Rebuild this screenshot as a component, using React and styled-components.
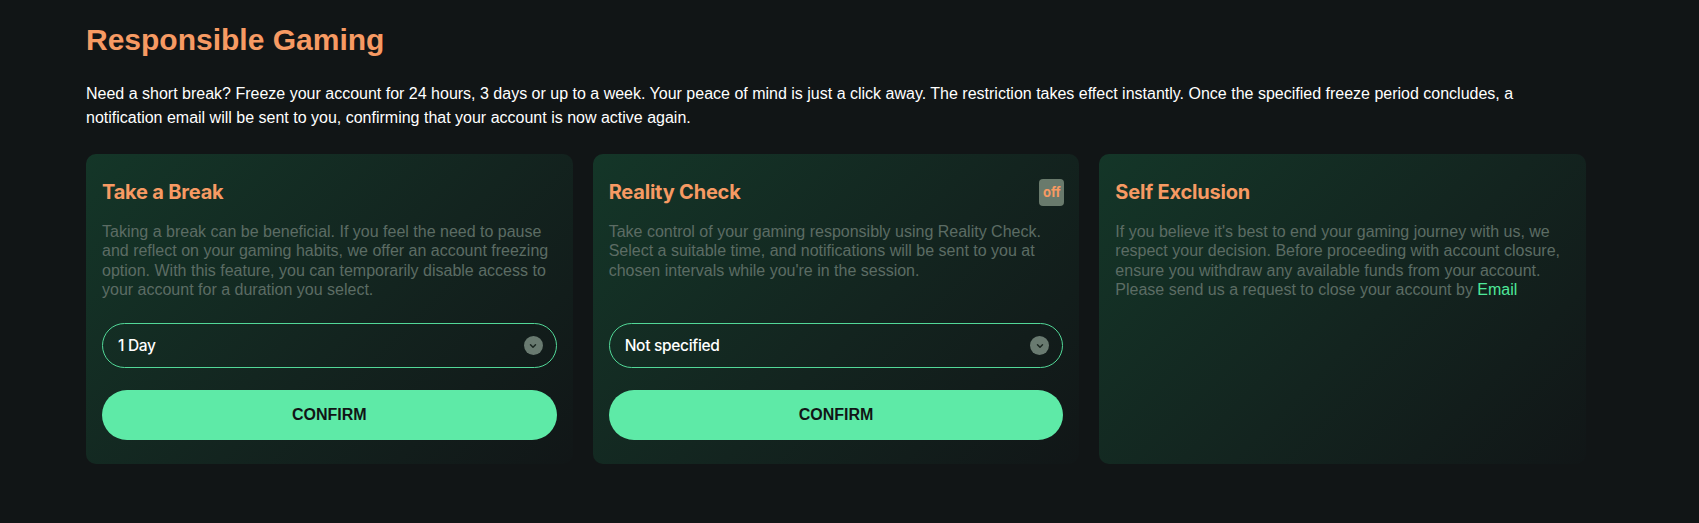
import React, { useState } from 'react'
import styled, { createGlobalStyle } from 'styled-components'

const GlobalStyle = createGlobalStyle`
  html, body {
    margin: 0;
    padding: 0;
    background: #111516;
  }
  body {
    font-family: "Liberation Sans", Arial, sans-serif;
  }
`

const Page = styled.div`
  min-height: 523px;
  padding: 22px 0 0 86px;
  box-sizing: border-box;
`

const Wrapper = styled.div`
  width: 1500px;
`

const Heading = styled.h1`
  margin: 0;
  font-size: 30px;
  line-height: 36px;
  font-weight: 700;
  color: #f79a63;
`

const Intro = styled.p`
  margin: 24px 0 0;
  font-size: 16px;
  line-height: 24px;
  color: #ffffff;
`

const Cards = styled.div`
  display: grid;
  grid-template-columns: repeat(3, 1fr);
  gap: 20px;
  margin-top: 24px;
`

const Card = styled.section`
  display: flex;
  flex-direction: column;
  padding: 24px 16px;
  border-radius: 10px;
  background: linear-gradient(135deg, #143628 0%, #13241f 55%, #111617 100%);
`

const CardHeader = styled.div`
  display: flex;
  align-items: center;
  justify-content: space-between;
  min-height: 28px;
`

const CardTitle = styled.h2`
  margin: 0;
  font-family: Inter, "Liberation Sans", sans-serif;
  font-size: 20px;
  line-height: 24px;
  font-weight: 700;
  color: #f79a63;
  letter-spacing: -0.2px;
`

const Badge = styled.span`
  display: inline-flex;
  align-items: center;
  justify-content: center;
  width: 25px;
  height: 27px;
  border-radius: 4px;
  background: #697a6c;
  color: #f79a63;
  font-family: Inter, "Liberation Sans", sans-serif;
  font-size: 13px;
  font-weight: 700;
  margin-right: -1px;
`

const Text = styled.p`
  margin: 16px 0 0;
  font-size: 16px;
  line-height: 19.3px;
  color: #5c6c64;
`

const Link = styled.a`
  color: #4ee89a;
  text-decoration: none;
`

const Controls = styled.div`
  display: flex;
  flex-direction: column;
  gap: 22px;
  margin-top: auto;
  padding-top: 24px;
`

const SelectBox = styled.button`
  display: flex;
  align-items: center;
  justify-content: space-between;
  height: 45px;
  padding: 0 13px 0 15px;
  border: 1px solid #52d898;
  border-radius: 999px;
  background: transparent;
  color: #ffffff;
  font-family: Inter, "Liberation Sans", sans-serif;
  font-size: 15.5px;
  font-weight: 500;
  cursor: pointer;
  letter-spacing: -0.3px;
`

const Chevron = styled.span`
  display: flex;
  align-items: center;
  justify-content: center;
  width: 19px;
  height: 19px;
  border-radius: 50%;
  background: #697a70;
`

const ConfirmButton = styled.button`
  height: 50px;
  border: none;
  border-radius: 999px;
  background: #5eeaa7;
  color: #111516;
  font-family: "Liberation Sans", Arial, sans-serif;
  font-size: 16px;
  font-weight: 700;
  cursor: pointer;
`

const Select = ({ value }) => (
  <SelectBox type="button">
    <span>{value}</span>
    <Chevron>
      <svg width="10" height="10" viewBox="0 0 24 24" fill="none" stroke="#1a2620" strokeWidth="3.5" strokeLinecap="round" strokeLinejoin="round">
        <path d="M6 9l6 6 6-6" />
      </svg>
    </Chevron>
  </SelectBox>
)

const App = () => {
  const [breakPeriod] = useState('1 Day')
  const [interval] = useState('Not specified')

  return (
    <>
      <GlobalStyle />
      <Page>
        <Wrapper>
          <Heading>Responsible Gaming</Heading>
          <Intro>
            Need a short break? Freeze your account for 24 hours, 3 days or up to a week. Your peace of mind is just a click away. The restriction takes effect instantly. Once the specified freeze period concludes, a notification email will be sent to you, confirming that your account is now active again.
          </Intro>
          <Cards>
            <Card>
              <CardHeader>
                <CardTitle>Take a Break</CardTitle>
              </CardHeader>
              <Text>
                Taking a break can be beneficial. If you feel the need to pause and reflect on your gaming habits, we offer an account freezing option. With this feature, you can temporarily disable access to your account for a duration you select.
              </Text>
              <Controls>
                <Select value={breakPeriod} />
                <ConfirmButton type="button">CONFIRM</ConfirmButton>
              </Controls>
            </Card>
            <Card>
              <CardHeader>
                <CardTitle>Reality Check</CardTitle>
                <Badge>off</Badge>
              </CardHeader>
              <Text>
                Take control of your gaming responsibly using Reality Check. Select a suitable time, and notifications will be sent to you at chosen intervals while you're in the session.
              </Text>
              <Controls>
                <Select value={interval} />
                <ConfirmButton type="button">CONFIRM</ConfirmButton>
              </Controls>
            </Card>
            <Card>
              <CardHeader>
                <CardTitle>Self Exclusion</CardTitle>
              </CardHeader>
              <Text>
                If you believe it's best to end your gaming journey with us, we respect your decision. Before proceeding with account closure, ensure you withdraw any available funds from your account. Please send us a request to close your account by <Link href="#">Email</Link>
              </Text>
            </Card>
          </Cards>
        </Wrapper>
      </Page>
    </>
  )
}

export default App
